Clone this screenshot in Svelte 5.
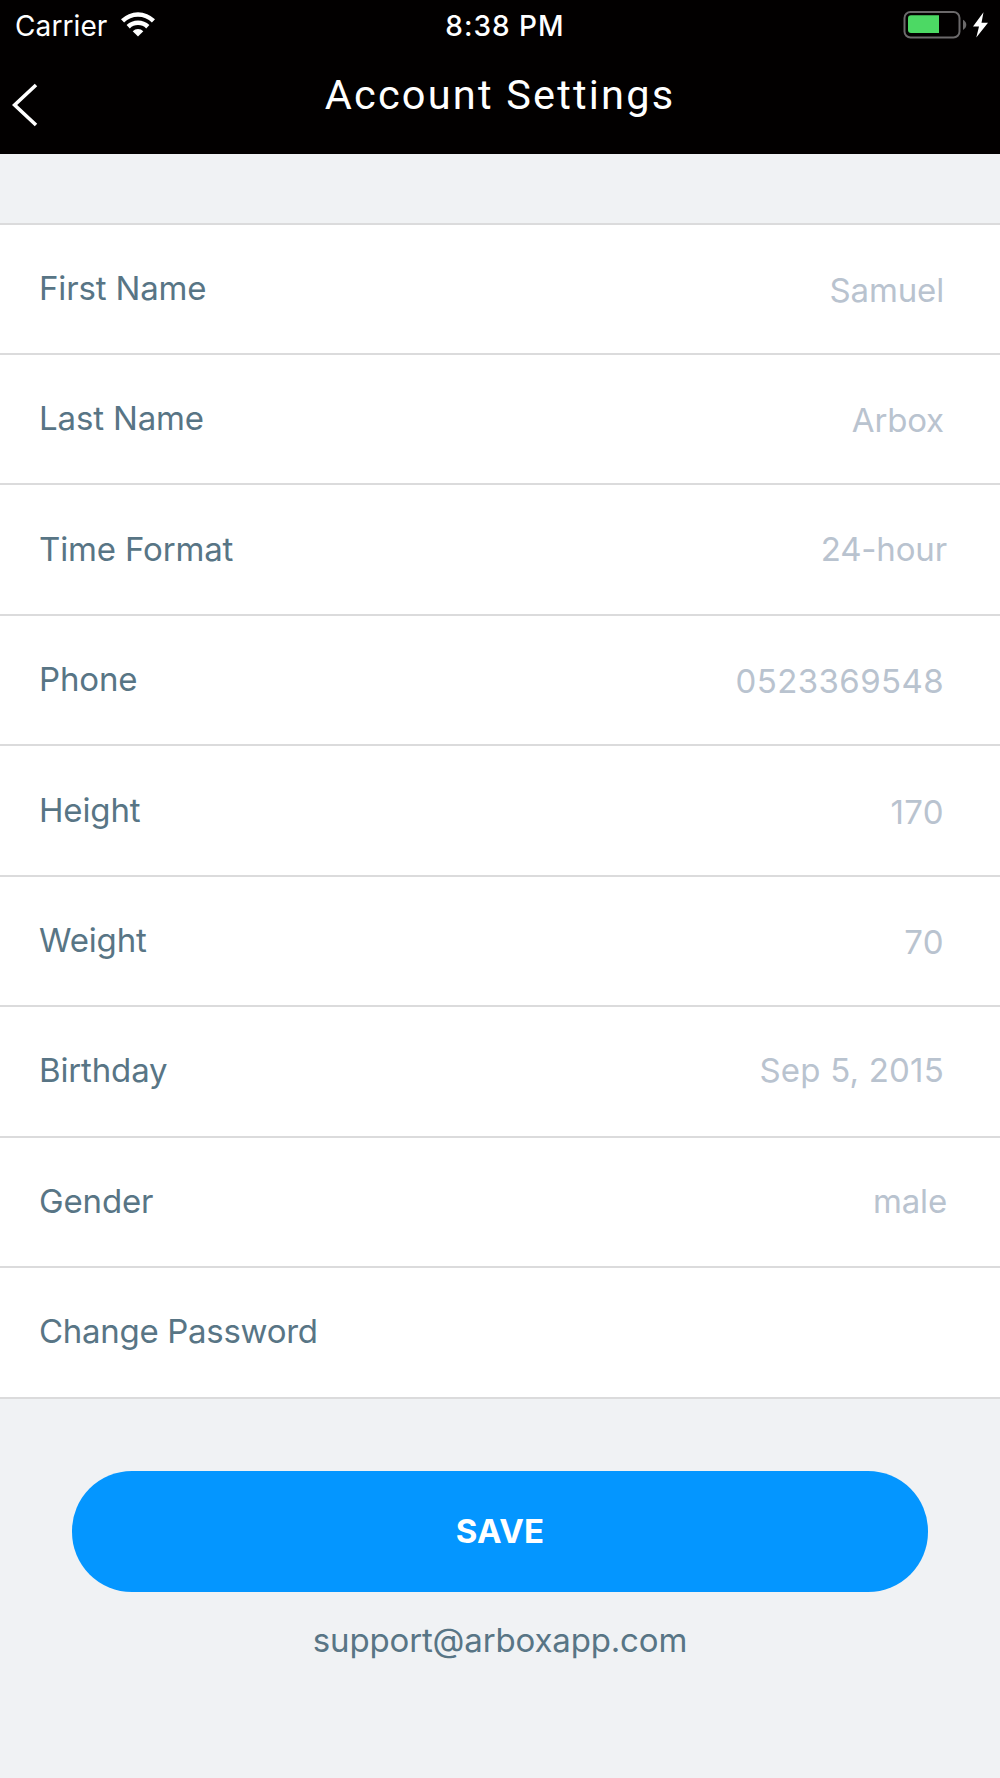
<script lang="ts">
  type Row = { label: string; value?: string; kind?: 'input' | 'picker' | 'date'; numeric?: boolean };

  const rows: Row[] = [
    { label: 'First Name', value: 'Samuel', kind: 'input' },
    { label: 'Last Name', value: 'Arbox', kind: 'input' },
    { label: 'Time Format', value: '24-hour', kind: 'picker' },
    { label: 'Phone', value: '0523369548', kind: 'input', numeric: true },
    { label: 'Height', value: '170', kind: 'input', numeric: true },
    { label: 'Weight', value: '70', kind: 'input', numeric: true },
    { label: 'Birthday', value: 'Sep 5, 2015', kind: 'date' },
    { label: 'Gender', value: 'male', kind: 'picker' },
    { label: 'Change Password' }
  ];
</script>

<div class="screen">
  <header>
    <div class="status">
      <div class="carrier">
        <span>Carrier</span>
        <svg width="34" height="25" viewBox="0 0 34 25" fill="#fff">
          <path d="M0 7.3A24.2 24.2 0 0 1 34 7.3L30.9 10.6A19.7 19.7 0 0 0 3.1 10.6Z" />
          <path d="M5.6 13.1A16.3 16.3 0 0 1 28.4 13.1L25.2 16.4A11.8 11.8 0 0 0 8.8 16.4Z" />
          <path d="M11.7 19.2A7.6 7.6 0 0 1 22.3 19.2L17 24.6Z" />
        </svg>
      </div>
      <div class="time">8:38 PM</div>
      <div class="battery">
        <svg width="86" height="28" viewBox="0 0 86 28">
          <rect x="1.5" y="1" width="55" height="25.5" rx="6" fill="none" stroke="#6b696a" stroke-width="2" />
          <path d="M8 4.3H36V22H8Q5 22 5 19V7.3Q5 4.3 8 4.3Z" fill="#4cd964" />
          <path d="M60 8.7Q63.3 10.5 63.3 13.8T60 18.9Z" fill="#6b696a" />
          <path d="M80.5 1.2L70 15.5H76L73.3 26.5L85 11.8H78.5Z" fill="#fff" />
        </svg>
      </div>
    </div>
    <nav>
      <button class="back" aria-label="Back">
        <svg width="26" height="44" viewBox="0 0 26 44" fill="none" stroke="#fff" stroke-width="3.6">
          <path d="M24 2L2.6 22L24 42" />
        </svg>
      </button>
      <h1>Account Settings</h1>
    </nav>
  </header>

  <ul>
    {#each rows as row}
      <li>
        <span class="label">{row.label}</span>
        {#if row.value}
          <span class="value {row.kind}" class:numeric={row.numeric}>{row.value}</span>
        {/if}
      </li>
    {/each}
  </ul>

  <footer>
    <button class="save">SAVE</button>
    <div class="support">support@arboxapp.com</div>
  </footer>
</div>

<style>
  :global(body) {
    background: #f0f2f4;
  }

  .screen {
    min-height: 1778px;
    font-family: Inter, 'Liberation Sans', sans-serif;
    font-size: 33px;
    letter-spacing: -0.15px;
    color: #587585;
  }

  header {
    height: 154.4px;
    background: #020000;
    color: #fff;
  }

  .status {
    display: grid;
    grid-template-columns: 1fr auto 1fr;
    height: 50px;
    padding: 0 11px 0 15px;
    font-size: 28px;
    line-height: 52px;
  }

  .carrier {
    display: flex;
    align-items: flex-start;
    gap: 14px;
    letter-spacing: 0.1px;

    svg {
      margin-top: 12px;
    }
  }

  .time {
    font-weight: 500;
    letter-spacing: 1px;
    padding-left: 6px;
  }

  .battery {
    display: flex;
    justify-content: flex-end;

    svg {
      margin-top: 11px;
    }
  }

  nav {
    display: grid;
    grid-template-columns: 60px 1fr 60px;
  }

  button {
    border: none;
    padding: 0;
    font: inherit;
  }

  .back {
    display: flex;
    justify-content: flex-start;
    padding: 33px 0 0 12px;
    background: none;
  }

  h1 {
    margin: 20px 0 0;
    font-family: Roboto, 'Liberation Sans', sans-serif;
    font-size: 41.5px;
    font-weight: 400;
    letter-spacing: 2.2px;
    line-height: 50px;
    text-align: center;
  }

  ul {
    list-style: none;
    margin: 68.2px 0 0;
    padding: 0;
    background: #fff;
    border-top: 2px solid #dbdbdc;
  }

  li {
    display: flex;
    align-items: center;
    justify-content: space-between;
    box-sizing: border-box;
    height: 130.44px;
    padding: 0 56px 2px 39px;
    border-bottom: 2px solid #dbdbdc;
  }

  li:last-child {
    letter-spacing: -0.3px;
  }

  .value {
    color: #b9c3cf;

    &.input {
      padding-top: 4px;
    }
    &.picker {
      margin-right: -3px;
    }
    &.numeric {
      letter-spacing: 0.4px;
    }
    &.date {
      letter-spacing: 0.2px;
    }
  }

  footer {
    display: flex;
    flex-direction: column;
    align-items: center;
    padding: 72px 72px 0;
  }

  .save {
    width: 100%;
    height: 121px;
    border-radius: 60px;
    background: #0496ff;
    color: #fff;
    font-weight: 700;
    letter-spacing: 0.2px;
  }

  .support {
    margin-top: 28px;
    line-height: 40px;
  }
</style>
